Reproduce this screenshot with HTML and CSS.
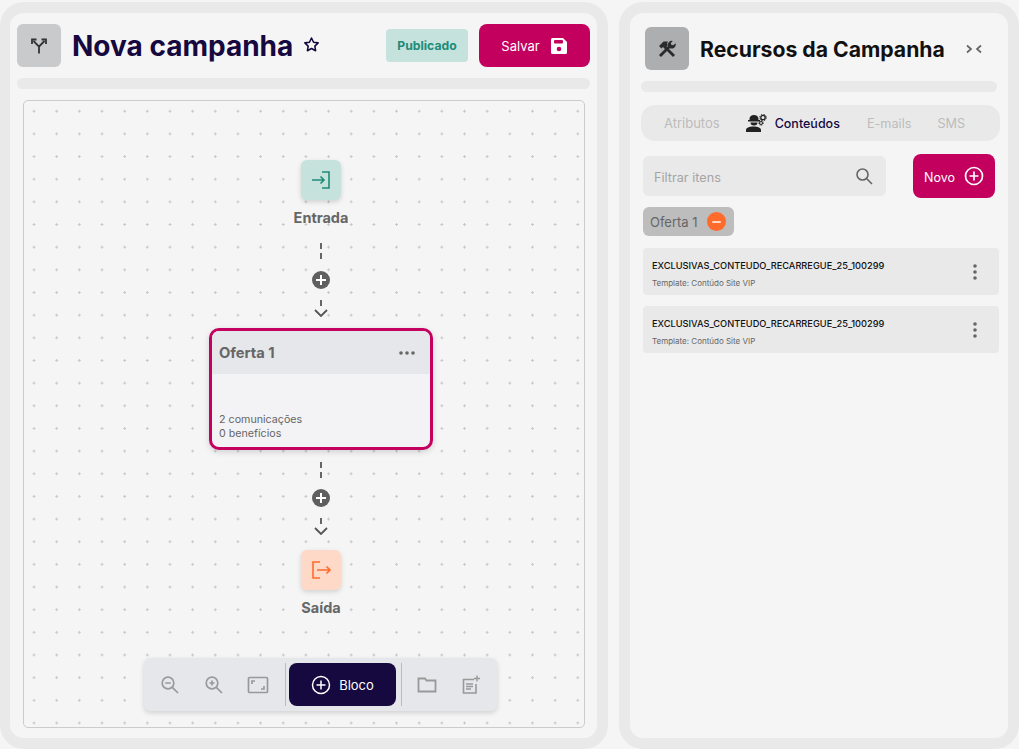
FILE: index.html
```html
<!doctype html>
<html lang="pt">
<head>
<meta charset="utf-8">
<title>Nova campanha</title>
<link rel="stylesheet" href="styles.css">
</head>
<body>
<div class="app">
  <section class="panel panel-left">
    <header class="head">
      <div class="head-icon">
        <svg width="20" height="20" viewBox="0 0 20 20" fill="none" stroke="#333" stroke-width="1.800"><path d="M10 17.500v-7L4.500 5M10 10.500L15.500 5"/><path d="M3 8V3.500h4.500M12.500 3.500H17V8" stroke-width="1.800"/></svg>
      </div>
      <h1 class="title">Nova campanha</h1>
      <svg class="star" width="17" height="17" viewBox="0 0 24 24" fill="none" stroke="#15093f" stroke-width="2.200" stroke-linejoin="round"><path d="M12 2.800l2.900 6 6.500.9-4.700 4.600 1.100 6.500L12 17.700l-5.800 3.100 1.100-6.500-4.700-4.600 6.500-.9z"/></svg>
      <span class="status">Publicado</span>
      <button class="btn-save">Salvar
        <svg width="18" height="18" viewBox="0 0 18 18"><path fill="#fff" d="M2.500 1h10.500l4 4v10.500a1.500 1.500 0 0 1-1.500 1.500h-13A1.500 1.500 0 0 1 1 15.500v-13A1.500 1.500 0 0 1 2.500 1z"/><rect x="4" y="3" width="9" height="3.500" rx="1" fill="#c4005f"/><circle cx="9" cy="12" r="2.300" fill="#c4005f"/></svg>
      </button>
    </header>
    <div class="bar"></div>
    <div class="canvas">
      <div class="node">
        <div class="node-icon node-in">
          <svg width="22" height="22" viewBox="0 0 22 22" fill="none" stroke="#218b77" stroke-width="1.600"><path d="M12 3h7v16h-7M2 11h12M10.500 7.500L14 11l-3.500 3.500"/></svg>
        </div>
        <div class="node-label">Entrada</div>
      </div>
      <div class="link">
        <div class="dash"></div>
        <div class="plus"><svg width="10" height="10" viewBox="0 0 10 10" stroke="#fff" stroke-width="2"><path d="M5 0v10M0 5h10"/></svg></div>
        <div class="dash dash-short"></div>
        <svg class="chev" width="14" height="8" viewBox="0 0 14 8" fill="none" stroke="#555" stroke-width="1.800"><path d="M1 1l6 6 6-6"/></svg>
      </div>
      <div class="offer">
        <div class="offer-head">
          <span class="offer-name">Oferta 1</span>
          <svg width="16" height="4" viewBox="0 0 16 4" fill="#666"><circle cx="2" cy="2" r="1.800"/><circle cx="8" cy="2" r="1.800"/><circle cx="14" cy="2" r="1.800"/></svg>
        </div>
        <div class="offer-body">
          <div>2 comunicações</div>
          <div>0 benefícios</div>
        </div>
      </div>
      <div class="link link-2">
        <div class="dash"></div>
        <div class="plus"><svg width="10" height="10" viewBox="0 0 10 10" stroke="#fff" stroke-width="2"><path d="M5 0v10M0 5h10"/></svg></div>
        <div class="dash dash-short"></div>
        <svg class="chev" width="14" height="8" viewBox="0 0 14 8" fill="none" stroke="#555" stroke-width="1.800"><path d="M1 1l6 6 6-6"/></svg>
      </div>
      <div class="node node-end">
        <div class="node-icon node-out">
          <svg width="22" height="22" viewBox="0 0 22 22" fill="none" stroke="#ff6b2b" stroke-width="1.600"><path d="M10 3H3v16h7M7 11h13M16.500 7.500L20 11l-3.500 3.500"/></svg>
        </div>
        <div class="node-label">Saída</div>
      </div>
      <div class="toolbar">
        <button class="tool"><svg width="20" height="20" viewBox="0 0 20 20" fill="none" stroke="#999" stroke-width="1.700"><circle cx="8" cy="8" r="5.800"/><path d="M12.300 12.300L18 18M5.200 8h5.600"/></svg></button>
        <button class="tool"><svg width="20" height="20" viewBox="0 0 20 20" fill="none" stroke="#999" stroke-width="1.700"><circle cx="8" cy="8" r="5.800"/><path d="M12.300 12.300L18 18M5.500 8h5M8 5.500v5" /></svg></button>
        <button class="tool"><svg width="22" height="18" viewBox="0 0 22 18" fill="none" stroke="#999" stroke-width="1.700"><rect x="1.500" y="1.500" width="19" height="15" rx="1"/><path d="M5 8V5h3M17 10v3h-3"/></svg></button>
        <span class="sep"></span>
        <button class="btn-block">
          <svg width="20" height="20" viewBox="0 0 20 20" fill="none" stroke="#fff" stroke-width="1.500"><circle cx="10" cy="10" r="8.500"/><path d="M10 5.500v9M5.500 10h9"/></svg>
          Bloco
        </button>
        <span class="sep sep-2"></span>
        <button class="tool tool-end"><svg width="20" height="18" viewBox="0 0 20 18" fill="none" stroke="#999" stroke-width="1.800"><path d="M1.500 2.500h6.500l1.500 2h9v11h-17z"/></svg></button>
        <button class="tool"><svg width="20" height="20" viewBox="0 0 20 20" fill="none" stroke="#999" stroke-width="1.600"><path d="M13 4.500H2.500V18h12.500V9"/><path d="M5 9h7M5 11.500h7M5 14h5"/><path d="M16 0.500v6M13 3.500h6" stroke-width="1.400"/></svg></button>
      </div>
    </div>
  </section>

  <section class="panel panel-right">
    <header class="res-head">
      <div class="head-icon head-icon-dark">
        <svg width="18" height="18" viewBox="0 0 18 18" fill="none" stroke="#2b2b2b"><path d="M2 16L11.500 6.500" stroke-width="2.800"/><path d="M16 16L7 7" stroke-width="2.800"/><path d="M1 6l4.500-4.500h4.500l-1 2.500 1 1-3.500 3.500-1.500-1.500-1.500 1.500z" fill="#2b2b2b" stroke="none"/><path d="M14.800 1a4 4 0 0 0-4.600 5.500l1.400 1.400a4 4 0 0 0 5.900-4.700l-2.200 2.100-2-.6-.5-1.800z" fill="#2b2b2b" stroke="none"/></svg>
      </div>
      <h2 class="res-title">Recursos da Campanha</h2>
      <svg class="collapse" width="16" height="10" viewBox="0 0 16 10" fill="none" stroke="#666" stroke-width="1.700"><path d="M1 1.500L5 5 1 8.500M15 1.500L11 5l4 3.500"/></svg>
    </header>
    <div class="bar bar-right"></div>
    <nav class="tabs">
      <span class="tab">Atributos</span>
      <span class="tab tab-on">
        <svg width="21" height="18" viewBox="0 0 21 18" fill="#222"><path d="M3.500 5C3.500 2.500 5.500 1 8 1s4.500 1.500 4.500 4v1H14v1.500H2V6h1.500z"/><path d="M4.500 8.500h7a3.500 3 0 0 1-7 0z"/><path d="M0 18v-2c0-2 3-3.500 7.500-3.500S15 14 15 16v2z"/><circle cx="17" cy="3.500" r="2.200" fill="none" stroke="#222" stroke-width="1.300"/><circle cx="17" cy="3.500" r="3.300" fill="none" stroke="#222" stroke-width="1" stroke-dasharray="1.300 1.300"/><circle cx="15" cy="9" r="1.500" fill="none" stroke="#222" stroke-width="1"/><circle cx="15" cy="9" r="2.400" fill="none" stroke="#222" stroke-width=".8" stroke-dasharray="1 1"/></svg>
        Conteúdos
      </span>
      <span class="tab tab-mail">E-mails</span>
      <span class="tab tab-sms">SMS</span>
    </nav>
    <div class="filter-row">
      <div class="filter">
        <span class="filter-text">Filtrar itens</span>
        <svg width="18" height="18" viewBox="0 0 18 18" fill="none" stroke="#666" stroke-width="1.600"><circle cx="7.500" cy="7.500" r="5.500"/><path d="M11.500 11.500L17 17"/></svg>
      </div>
      <button class="btn-new"><span class="new-text">Novo</span>
        <svg width="20" height="20" viewBox="0 0 20 20" fill="none" stroke="#fff" stroke-width="1.700"><circle cx="10" cy="10" r="8.500"/><path d="M10 5.500v9M5.500 10h9"/></svg>
      </button>
    </div>
    <div class="chip">Oferta 1
      <span class="chip-x"></span>
    </div>
    <div class="item">
      <div class="item-text">
        <div class="item-name">EXCLUSIVAS_CONTEUDO_RECARREGUE_25_100299</div>
        <div class="item-sub">Template: Contúdo Site VIP</div>
      </div>
      <svg width="4" height="16" viewBox="0 0 4 16" fill="#666"><circle cx="2" cy="2" r="1.800"/><circle cx="2" cy="8" r="1.800"/><circle cx="2" cy="14" r="1.800"/></svg>
    </div>
    <div class="item">
      <div class="item-text">
        <div class="item-name">EXCLUSIVAS_CONTEUDO_RECARREGUE_25_100299</div>
        <div class="item-sub">Template: Contúdo Site VIP</div>
      </div>
      <svg width="4" height="16" viewBox="0 0 4 16" fill="#666"><circle cx="2" cy="2" r="1.800"/><circle cx="2" cy="8" r="1.800"/><circle cx="2" cy="14" r="1.800"/></svg>
    </div>
  </section>
</div>
</body>
</html>
```

FILE: styles.css
```css
* { margin:0; padding:0; box-sizing:border-box; }
html, body { height:100%; }
body { background:#f5f5f5; font-family:"Inter","Liberation Sans",sans-serif; overflow:hidden; }
button { border:none; font-family:inherit; }
svg { display:block; flex:none; }

.app { display:flex; gap:11px; padding-top:2px; height:749px; }
.panel { height:747px; background:#f5f5f5; border:11px solid #e9e9e9; border-radius:24px; }
.panel-left { width:608px; border-left-width:10px; padding:11px 7px 0; display:flex; flex-direction:column; }
.panel-right { width:400px; padding:14px 11px 0 11px; display:flex; flex-direction:column; }

.head { display:flex; align-items:center; height:43px; }
.head-icon { width:44px; height:43px; background:#c9cacc; border-radius:6px; display:flex; align-items:center; justify-content:center; flex:none; }
.head-icon-dark { background:#adaeb0; }
.title { font-size:28px; font-weight:700; color:#15093f; margin-left:11px; padding-top:1px; white-space:nowrap; }
.star { margin:0 0 2px 10px; }
.status { width:82px; height:33px; margin-left:auto; background:#c6e2dd; border-radius:4px; color:#218b77; font-size:12.200px; font-weight:700; display:flex; align-items:center; justify-content:center; }
.btn-save { width:111px; height:43px; margin-left:11px; background:#c4005f; color:#fff; border-radius:8px; font-size:13px; display:flex; align-items:center; justify-content:center; gap:10px; }
.bar { height:11px; margin-top:11px; background:#e9e9e9; border-radius:6px; }

.canvas { width:562px; height:628px; margin:11px 0 0 6px; border:1px solid #ccc; border-radius:5px; display:flex; flex-direction:column; align-items:center; padding:59px 0 16px 34px;
  background-image:radial-gradient(circle, #c8c8c8 1px, transparent 1.4px); background-size:22.67px 22.67px; background-position:-1.3px -1.1px; }
.node { display:flex; flex-direction:column; align-items:center; }
.node-end { margin-top:15px; }
.node-icon { width:40px; height:40px; border-radius:6px; display:flex; align-items:center; justify-content:center; box-shadow:0 2px 5px rgba(0,0,0,.15); }
.node-in { background:#c6e2dd; }
.node-out { background:#ffd9c8; }
.node-label { font-size:14.500px; font-weight:700; color:#666; margin-top:9px; line-height:17px; }

.link { display:flex; flex-direction:column; align-items:center; margin-top:17px; }
.link-2 { margin-top:12px; }
.dash { width:2px; height:16px; background:repeating-linear-gradient(to bottom, #666 0 6px, transparent 6px 10px); }
.dash-short { height:6px; margin-top:11px; background:#666; }
.plus { width:18px; height:18px; margin-top:12px; border-radius:50%; background:#5f5f5f; display:flex; align-items:center; justify-content:center; }
.link-2 .plus { margin-top:11px; }
.chev { margin-top:3px; }

.offer { width:224px; height:122px; margin-top:11px; background:#f3f3f5; border:3px solid #c40060; border-radius:10px; overflow:hidden; box-shadow:0 2px 6px rgba(0,0,0,.15); flex:none; }
.offer-head { height:43px; background:#e6e7ea; display:flex; align-items:center; justify-content:space-between; padding:0 15px 0 7px; }
.offer-name { font-size:14.700px; font-weight:700; color:#666; }
.offer-body { padding-top:39px; padding-left:7px; font-size:10.700px; line-height:14px; color:#666; }

.toolbar { margin:auto 0 0 -1px; width:353px; height:53px; flex:none; background:#e6e7ea; border-radius:6px; box-shadow:0 2px 5px rgba(0,0,0,.15); display:flex; align-items:center; padding-left:4px; }
.tool { width:44px; height:43px; background:none; display:flex; align-items:center; justify-content:center; flex:none; }
.sep { width:1px; height:43px; background:#bbb; margin:0 3px 0 5px; flex:none; }
.sep-2 { margin-left:5px; }
.btn-block { width:107px; height:43px; background:#15093f; color:#fff; border-radius:8px; font-size:13px; display:flex; align-items:center; justify-content:center; gap:8px; flex:none; }

.res-head { display:flex; align-items:center; height:43px; padding-left:4px; }
.res-title { font-size:21.200px; font-weight:700; color:#111; margin-left:11px; white-space:nowrap; }
.collapse { margin-left:21px; }
.bar-right { width:356px; margin-top:11px; }

.tabs { width:359px; height:36px; margin-top:13px; background:#e9e9e9; border-radius:14px; display:flex; align-items:center; padding-left:23px; font-size:13px; color:#bcbcbc; flex:none; }
.tab { display:flex; align-items:center; gap:8px; }
.tab-on { margin-left:26px; color:#15093f; font-size:12.500px; font-weight:500; }
.tab-mail { margin-left:27px; font-size:12.700px; }
.tab-sms { margin-left:26px; font-size:12.700px; }

.filter-row { display:flex; align-items:center; margin-top:13px; padding-left:2px; height:44px; flex:none; }
.filter { width:243px; height:40px; background:#e9e9e9; border-radius:6px; display:flex; align-items:center; justify-content:space-between; padding:0 13px 0 11px; }
.filter-text { font-size:12.700px; color:#a5a5a5; padding-top:2px; }
.btn-new { width:82px; height:44px; margin-left:27px; background:#c4005f; color:#fff; border-radius:8px; font-size:12.500px; display:flex; align-items:center; justify-content:center; gap:9px; }
.new-text { padding-top:2px; }

.chip { width:91px; height:29px; margin:9px 0 0 2px; background:#bdbdbd; border-radius:6px; font-size:13px; color:#666; display:flex; align-items:center; padding-left:7px; gap:9px; flex:none; }
.chip-x { width:19px; height:19px; border-radius:50%; background:#ff6b2b; position:relative; flex:none; }
.chip-x::after { content:""; position:absolute; left:5px; right:5px; top:8.500px; height:2px; background:#ffd9c8; border-radius:1px; }

.item { width:356px; height:47px; margin:11px 0 0 2px; background:#e9e9e9; border-radius:4px; display:flex; align-items:center; justify-content:space-between; padding:0 22px 0 9px; flex:none; }
.chip + .item { margin-top:12px; }
.item-text { padding-top:4px; }
.item-name { font-size:9.250px; font-weight:500; color:#111; line-height:12px; white-space:nowrap; }
.item-sub { font-size:8px; color:#666; line-height:10px; margin-top:6px; }
```
